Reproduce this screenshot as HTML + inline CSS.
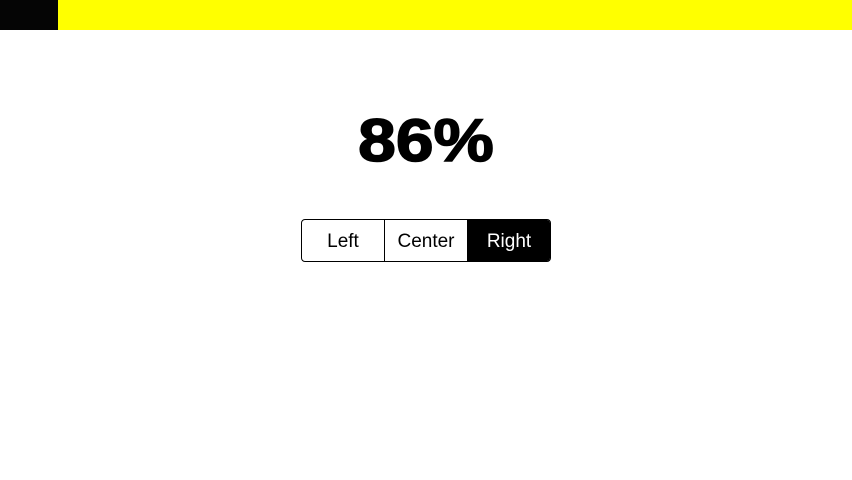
<!DOCTYPE html>
<html><head><style>
body{margin:0;width:852px;height:480px;background:#fff;position:relative;overflow:hidden;font-family:"Liberation Sans",sans-serif}
.b{position:absolute;left:0;top:0;width:58px;height:30px;background:#050505}
.y{position:absolute;left:58px;top:0;width:794px;height:30px;background:#ffff00}
.p{position:absolute;left:0;width:852px;top:104px;text-align:center;font-weight:900;font-size:60px;line-height:74px;transform:scaleX(1.13);-webkit-text-stroke:1.5px #000}
.s{position:absolute;left:301px;top:219px;width:248px;height:41px;border:1px solid #000;border-radius:4px;display:flex;overflow:hidden}
.s div{flex:1;text-align:center;line-height:43px;font-size:19px}
.s div+div{border-left:1.5px solid #000}
.s .a{background:#000;color:#fff}
</style></head><body>
<div class="b"></div><div class="y"></div>
<div class="p">86%</div>
<div class="s"><div>Left</div><div>Center</div><div class="a">Right</div></div>
</body></html>
